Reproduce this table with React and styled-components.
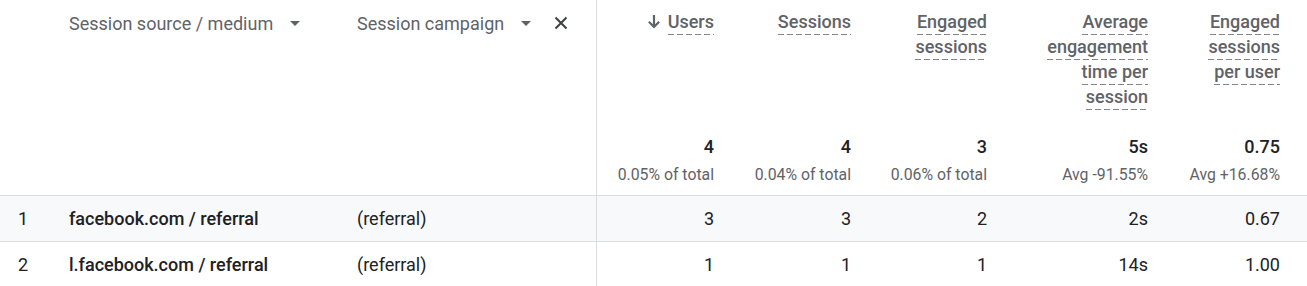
import React from 'react';
import styled, { createGlobalStyle } from 'styled-components';

const GlobalStyle = createGlobalStyle`
  body {
    margin: 0;
    background: #ffffff;
    font-family: Roboto, 'Liberation Sans', Arial, sans-serif;
    color: #202124;
  }
`;

const GRID = '69px 288px 240px 133px 137px 136px 161px 132px 1fr';

const metrics = [
  { key: 'users', label: ['Users'], sorted: true, total: '4', sub: '0.05% of total' },
  { key: 'sessions', label: ['Sessions'], total: '4', sub: '0.04% of total' },
  { key: 'engaged', label: ['Engaged', 'sessions'], total: '3', sub: '0.06% of total' },
  { key: 'avg', label: ['Average', 'engagement', 'time per', 'session'], total: '5s', sub: 'Avg -91.55%' },
  { key: 'perUser', label: ['Engaged', 'sessions', 'per user'], total: '0.75', sub: 'Avg +16.68%' },
];

const rows = [
  { source: 'facebook.com / referral', campaign: '(referral)', values: ['3', '3', '2', '2s', '0.67'] },
  { source: 'l.facebook.com / referral', campaign: '(referral)', values: ['1', '1', '1', '14s', '1.00'] },
];

const Table = styled.div`
  width: 100%;
  overflow: hidden;
`;

const Row = styled.div`
  display: grid;
  grid-template-columns: ${GRID};
  height: ${(p) => p.$height}px;
  box-sizing: border-box;
  border-bottom: ${(p) => (p.$divider ? '1px solid #dadce0' : 'none')};
  background: ${(p) => (p.$shaded ? '#f8f9fa' : '#ffffff')};
`;

const Cell = styled.div`
  box-sizing: border-box;
  height: 100%;
  display: flex;
  align-items: ${(p) => (p.$center ? 'center' : 'flex-start')};
  border-right: ${(p) => (p.$split ? '1px solid #dadce0' : 'none')};
`;

const IndexCell = styled(Cell)`
  padding-left: 18px;
  font-size: 18px;
`;

const DimHeader = styled(Cell)`
  padding-top: 11px;
  font-size: 18px;
  line-height: 25px;
  color: #5f6368;
`;

const DimLabel = styled.span`
  white-space: nowrap;
`;

const Caret = styled.svg`
  width: 10px;
  height: 5px;
  margin-top: 10px;
  margin-left: ${(p) => p.$gap}px;
  fill: #5f6368;
  flex-shrink: 0;
`;

const CloseIcon = styled.svg`
  width: 14px;
  height: 14px;
  margin-top: 5px;
  margin-left: 23px;
  stroke: #3c4043;
  stroke-width: 2;
  flex-shrink: 0;
`;

const DimValue = styled(Cell)`
  font-size: 18px;
  font-weight: ${(p) => (p.$strong ? 500 : 400)};
  color: #202124;
  white-space: nowrap;
`;

const MetricHeader = styled(Cell)`
  flex-direction: column;
  align-items: flex-end;
  padding-top: 11px;
  padding-right: 16px;
  font-size: 18px;
  font-weight: 500;
  color: #5f6368;
`;

const HeaderLine = styled.div`
  display: flex;
  align-items: flex-start;
  height: 25px;
  white-space: nowrap;
`;

const Dashed = styled.span`
  display: block;
  line-height: 21px;
  padding-bottom: 3px;
  background-image: linear-gradient(to right, #80868b 0 6px, transparent 6px 9px);
  background-size: 9px 1px;
  background-repeat: repeat-x;
  background-position: left bottom;
`;

const SortArrow = styled.svg`
  width: 12px;
  height: 14px;
  margin-top: 4px;
  margin-right: 8px;
  fill: #5f6368;
`;

const TotalCell = styled(Cell)`
  flex-direction: column;
  align-items: flex-end;
  padding-top: 7px;
  padding-right: 16px;
`;

const TotalValue = styled.div`
  font-size: 18px;
  font-weight: 500;
  line-height: 24px;
  color: #202124;
`;

const TotalSub = styled.div`
  margin-top: 6px;
  font-size: 15.8px;
  line-height: 20px;
  color: #5f6368;
  white-space: nowrap;
`;

const ValueCell = styled(Cell)`
  justify-content: flex-end;
  padding-right: 16px;
  font-size: 18px;
  color: #202124;
`;

const DropCaret = ({ gap }) => (
  <Caret $gap={gap} viewBox="0 0 10 5">
    <path d="M0 0l5 5 5-5z" />
  </Caret>
);

const App = () => (
  <>
    <GlobalStyle />
    <Table>
      <Row $height={128}>
        <Cell />
        <DimHeader>
          <DimLabel>Session source / medium</DimLabel>
          <DropCaret gap={17} />
        </DimHeader>
        <DimHeader $split>
          <DimLabel>Session campaign</DimLabel>
          <DropCaret gap={17} />
          <CloseIcon viewBox="0 0 14 14">
            <path d="M1.5 1.5l11 11M12.5 1.5l-11 11" fill="none" />
          </CloseIcon>
        </DimHeader>
        {metrics.map((m) => (
          <MetricHeader key={m.key}>
            {m.label.map((line, i) => (
              <HeaderLine key={line}>
                {m.sorted && i === 0 && (
                  <SortArrow viewBox="0 0 12 14">
                    <path d="M4.9 0h2.2v9.3l3.3-3.3 1.5 1.5L6 13.4 0.1 7.5l1.5-1.5 3.3 3.3z" />
                  </SortArrow>
                )}
                <Dashed>{line}</Dashed>
              </HeaderLine>
            ))}
          </MetricHeader>
        ))}
        <Cell />
      </Row>

      <Row $height={68} $divider>
        <Cell />
        <Cell />
        <Cell $split />
        {metrics.map((m) => (
          <TotalCell key={m.key}>
            <TotalValue>{m.total}</TotalValue>
            <TotalSub>{m.sub}</TotalSub>
          </TotalCell>
        ))}
        <Cell />
      </Row>

      {rows.map((r, idx) => (
        <Row key={r.source} $height={46} $divider $shaded={idx === 0}>
          <IndexCell $center>{idx + 1}</IndexCell>
          <DimValue $center $strong>{r.source}</DimValue>
          <DimValue $center $split>{r.campaign}</DimValue>
          {r.values.map((v, i) => (
            <ValueCell $center key={metrics[i].key}>{v}</ValueCell>
          ))}
          <Cell />
        </Row>
      ))}
    </Table>
  </>
);

export default App;
